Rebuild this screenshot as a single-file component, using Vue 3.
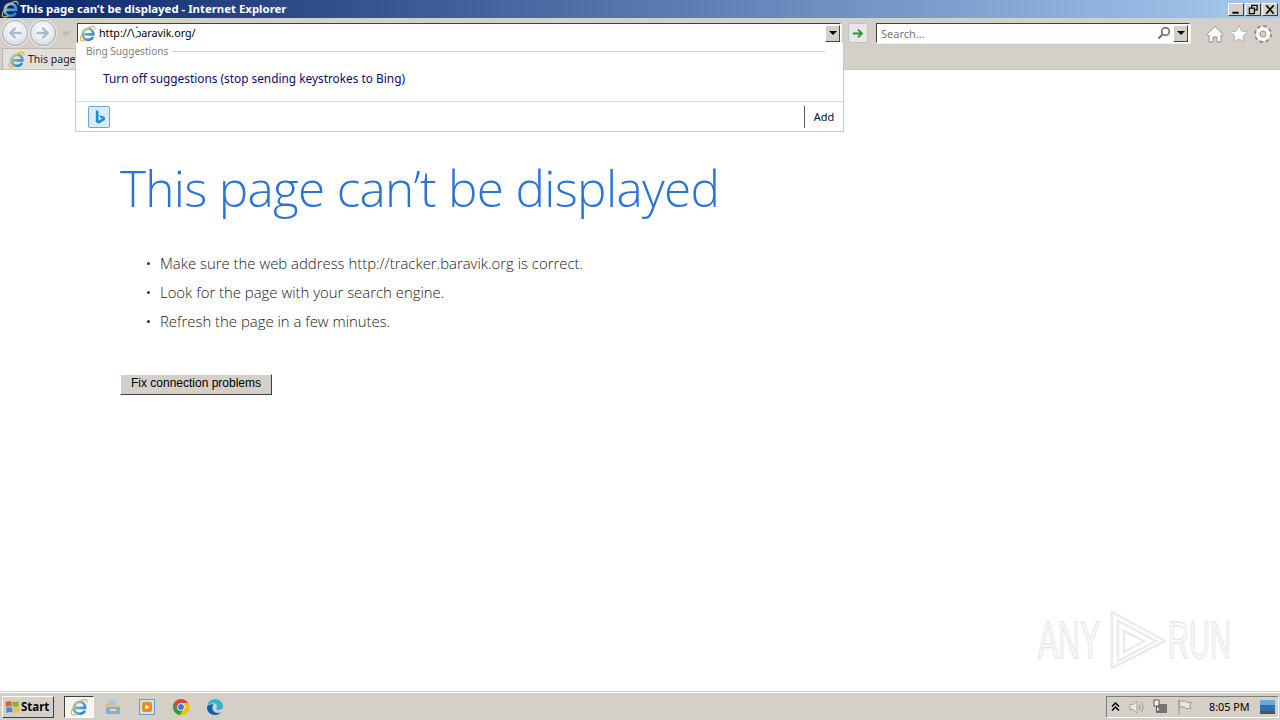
<template>
  <div class="window">
    <!-- title bar -->
    <header class="titlebar">
      <svg class="ie title-ie" viewBox="0 0 20 20"><use href="#ie-logo" /></svg>
      <span class="title-text">This page can’t be displayed - Internet Explorer</span>
      <div class="caption">
        <button class="cap-btn"><svg viewBox="0 0 14 12"><rect x="3" y="8.500" width="7" height="2" fill="#000" /></svg></button>
        <button class="cap-btn"><svg viewBox="0 0 14 12"><path d="M5.500 1.500h6v5H9M5.500 1.500v2.500M3 4.500h5.500v6H3z" fill="none" stroke="#000" stroke-width="1.300" /></svg></button>
        <button class="cap-btn"><svg viewBox="0 0 14 12"><path d="M3 1.500l8 9M11 1.500l-8 9" stroke="#000" stroke-width="1.700" /></svg></button>
      </div>
    </header>

    <!-- shared logo -->
    <svg width="0" height="0" class="defs">
      <defs>
        <linearGradient id="ie-grad" x1="0" y1="0" x2="1" y2="1">
          <stop offset="0" stop-color="#8fd3f2" />
          <stop offset="1" stop-color="#1e78c2" />
        </linearGradient>
        <symbol id="ie-logo" viewBox="0 0 20 20">
          <path d="M4.500 11h12.300c.3-3.900-2.300-6.600-6-6.600-3.800 0-6.500 2.900-6.500 6.600s2.700 6.500 6.500 6.500c2.700 0 4.600-1.200 5.600-3.300" fill="none" stroke="url(#ie-grad)" stroke-width="3" />
          <path d="M2.200 18.200C-.5 15.500 6 5.500 13 2.500c3.700-1.600 6.300-1 5.700 2.700M2.200 18.200c1.500 1.200 4 .500 6-.8" fill="none" stroke="#e6b33a" stroke-width="1.400" />
        </symbol>
      </defs>
    </svg>

    <!-- navigation row -->
    <div class="toolbar">
      <div class="nav">
        <button class="round"><svg viewBox="0 0 26 26"><path d="M20 13H8.500M13.500 7.500L8 13l5.500 5.500" fill="none" stroke="#f4f6f9" stroke-width="5" /><path d="M20 13H8.500M13.500 7.500L8 13l5.500 5.500" fill="none" stroke="#a9bace" stroke-width="2.600" /></svg></button>
        <button class="round"><svg viewBox="0 0 26 26"><path d="M6 13h11.500M12.500 7.500L18 13l-5.500 5.500" fill="none" stroke="#f4f6f9" stroke-width="5" /><path d="M6 13h11.500M12.500 7.500L18 13l-5.500 5.500" fill="none" stroke="#a9bace" stroke-width="2.600" /></svg></button>
        <svg class="nav-drop" viewBox="0 0 10 6"><path d="M.5.500h9L5 5.500z" fill="#bdbab3" /></svg>
      </div>
      <div class="address field">
        <svg class="ie addr-ie" viewBox="0 0 20 20"><use href="#ie-logo" /></svg>
        <span class="addr-text">http://\baravik.org/</span>
        <svg class="ibeam" viewBox="0 0 6 13"><rect x="0" y="2" width="2.500" height="9" fill="#fff" /><path d="M2 .500v1.500M.500 11.500l2-1" stroke="#000" /></svg>
        <button class="drop"><i></i></button>
      </div>
      <button class="go"><svg viewBox="0 0 16 14"><path d="M2 7h10M8 2.500L12.500 7 8 11.500" fill="none" stroke="#2f9a2a" stroke-width="2.200" /></svg></button>
      <div class="search field">
        <span class="search-text">Search...</span>
        <svg class="lens" viewBox="0 0 14 14"><circle cx="8.500" cy="5.500" r="3.800" fill="none" stroke="#6d6d6d" stroke-width="1.600" /><path d="M5.500 8.500L1.500 12.500" stroke="#6d6d6d" stroke-width="2" /></svg>
        <button class="drop"><i></i></button>
      </div>
      <div class="tools">
        <svg viewBox="0 0 20 20"><path d="M1.500 10.500L10 2.500l8.500 8-1.500 1.500-1-.9V18h-4v-5H8v5H4v-6.900l-1 .9z" fill="#fff" stroke="#8f8f8a" /></svg>
        <svg viewBox="0 0 20 20"><path d="M10 1.500l2.600 5.600 6 .7-4.500 4.100 1.200 6L10 14.900l-5.300 3 1.200-6-4.500-4.100 6-.7z" fill="#fff" stroke="#b4b4ae" /></svg>
        <svg viewBox="0 0 20 20"><circle cx="10" cy="10" r="7" fill="#fff" stroke="#8f8f8a" stroke-width="4" stroke-dasharray="3 2.500" /><circle cx="10" cy="10" r="6" fill="none" stroke="#fff" stroke-width="2.200" /><circle cx="10" cy="10" r="3" fill="#d4d0c8" stroke="#8f8f8a" /></svg>
      </div>
    </div>

    <!-- tab row -->
    <div class="tabs">
      <div class="tab">
        <svg class="ie tab-ie" viewBox="0 0 20 20"><use href="#ie-logo" /></svg>
        <span>This page</span>
      </div>
    </div>

    <!-- page content -->
    <main class="page">
      <h1>This page can’t be displayed</h1>
      <ul>
        <li v-for="tip in tips" :key="tip">{{ tip }}</li>
      </ul>
      <button class="fix">Fix connection problems</button>

      <!-- autocomplete flyout -->
      <div class="flyout">
        <div class="fly-head"><span>Bing Suggestions</span><i></i></div>
        <div class="fly-link">Turn off suggestions (stop sending keystrokes to Bing)</div>
        <div class="fly-foot">
          <div class="bing"><svg viewBox="0 0 22 22"><path d="M7.500 3.500l3 1v10.500l4-2.300-2-1-1.200-3 6.200 2.200v3.400l-7 4-3-1.700z" fill="#1593d8" /></svg></div>
          <button class="add">Add</button>
        </div>
      </div>

      <!-- watermark -->
      <div class="mark">
        <span class="any">ANY</span>
        <svg viewBox="0 0 57 60"><path d="M2 2l53 29L2 58zM8 11l38 20L8 51zM14 21l20 10-20 11z" fill="none" stroke="#ebebeb" stroke-width="2.500" /></svg>
        <span class="run">RUN</span>
      </div>
    </main>

    <!-- taskbar -->
    <footer class="taskbar">
      <button class="start">
        <svg viewBox="0 0 16 16"><g transform="rotate(-6 8 8)"><path d="M1 2.500c2-1 4-1 6 0v5c-2-1-4-1-6 0z" fill="#e2622b" /><path d="M8 2.500c2 1 4 1 6 0v5c-2 1-4 1-6 0z" fill="#7fb53a" /><path d="M1 8.500c2-1 4-1 6 0v5c-2-1-4-1-6 0z" fill="#3f8fd8" /><path d="M8 8.500c2 1 4 1 6 0v5c-2 1-4 1-6 0z" fill="#f2c037" /></g></svg>
        <span>Start</span>
      </button>
      <div class="quick">
        <div class="pinned active"><svg class="ie task-ie" viewBox="0 0 20 20"><use href="#ie-logo" /></svg></div>
        <div class="pinned">
          <svg viewBox="0 0 18 18"><path d="M2 5h5l1.500 2H16v9H2z" fill="#e9c46c" /><path d="M4 2.500h8v5H4z" fill="#9ecbe8" /><path d="M2 9h14v7H2z" fill="#7fb4d0" /><path d="M6 11h6v2H6z" fill="#e9dca8" /></svg>
        </div>
        <div class="pinned">
          <svg viewBox="0 0 18 18"><rect x="1.500" y="1.500" width="15" height="15" fill="#cfe0ef" stroke="#6f9cc9" /><rect x="4" y="4" width="10" height="10" rx="2" fill="#f08a1d" /><path d="M7.500 6.500v5l4-2.500z" fill="#fff" /></svg>
        </div>
        <div class="pinned">
          <svg viewBox="0 0 18 18"><circle cx="9" cy="9" r="8" fill="#db4437" /><path d="M9 5h7.300A8 8 0 0 1 8 17z" fill="#f4c20d" /><path d="M2 5.200A8 8 0 0 0 8 17l3.500-6H6z" fill="#2f9e44" /><circle cx="9" cy="9" r="3.800" fill="#fff" /><circle cx="9" cy="9" r="2.900" fill="#3b78e7" /></svg>
        </div>
        <div class="pinned">
          <svg viewBox="0 0 18 18"><path d="M1 9.500C1 4.500 4.500 1 9 1c4.800 0 8 3.400 8 7.500 0 2.500-2 3.500-4 3.500-1.500 0-2.800-.5-2.800-1.500 0-.6.700-.8.700-2.200 0-1.700-1.600-3-3.700-3C3.500 5.800 1 7.500 1 9.500z" fill="#36b7c9" /><path d="M1 9.500c0 4.500 3.500 7.500 8 7.500 2.300 0 4.500-.8 6-2.500-3 1-6 .5-7.500-1.500C6 11.200 6 8.500 7.500 6.200 4 6 1 7.500 1 9.500z" fill="#0f5fb4" /></svg>
        </div>
      </div>
      <div class="tray">
        <svg class="tray-up" viewBox="0 0 9 10"><path d="M1 4.500L4.500 1 8 4.500M1 8.500L4.500 5 8 8.500" fill="none" stroke="#000" stroke-width="1.500" /></svg>
        <svg class="speaker" viewBox="0 0 18 18"><path d="M2 6.500h3L9 3v12l-4-3.500H2z" fill="#eceae5" stroke="#a5a39e" /><path d="M11 6.500c1.200 1.500 1.200 3.500 0 5M13.500 4.500c2 2.500 2 6.500 0 9" fill="none" stroke="#a5a39e" stroke-width="1.200" /></svg>
        <svg class="network" viewBox="0 0 18 18"><rect x="5" y="6" width="11" height="9" fill="#77756f" /><path d="M3 2h5v6H3zM5.500 8v5H9" fill="#fff" stroke="#55534e" /></svg>
        <svg class="flag" viewBox="0 0 18 18"><path d="M3 1.500v15" stroke="#9b9994" stroke-width="1.200" /><path d="M3.500 3h6l1.500 1.500h5L13.500 8l1.500 2.500h-5L8.500 9h-5z" fill="#e8e6e1" stroke="#9b9994" /></svg>
        <span class="clock">8:05 PM</span>
        <svg class="desk" viewBox="0 0 15 14" preserveAspectRatio="none"><rect x="0" y="0" width="15" height="11" fill="#2f6fb4" /><rect x="0" y="0" width="15" height="5" fill="#6fa8d8" /><rect x="0" y="11" width="15" height="3" fill="#55534e" /></svg>
      </div>
    </footer>
  </div>
</template>

<script setup>
const tips = [
  'Make sure the web address http://tracker.baravik.org is correct.',
  'Look for the page with your search engine.',
  'Refresh the page in a few minutes.',
]
</script>

<style>
html,
body {
  margin: 0;
  overflow: hidden;
}
</style>

<style scoped>
.window {
  width: 1280px;
  height: 720px;
  display: flex;
  flex-direction: column;
  background: #fff;
  font-family: "DejaVu Sans", sans-serif;
  overflow: hidden;
}

.defs {
  position: absolute;
}

button {
  font-family: inherit;
  padding: 0;
}

.titlebar {
  flex: 0 0 18px;
  height: 18px;
  display: flex;
  align-items: center;
  background: linear-gradient(90deg, #0a246a 0%, #a6caf0 100%);
  color: #fff;
}

.title-ie {
  width: 18px;
  height: 18px;
  margin: 0 1px 0 1px;
  flex-shrink: 0;
}

.title-text {
  font-family: "Noto Sans", sans-serif;
  font-size: 11.4px;
  font-weight: 700;
  white-space: nowrap;
  padding-bottom: 2px;
}

.caption {
  margin-left: auto;
  margin-right: 2px;
  display: flex;
  gap: 1px;
}

.cap-btn {
  width: 16px;
  height: 13px;
  background: #d4d0c8;
  border: 1px solid;
  border-color: #fff #404040 #404040 #fff;
  box-sizing: border-box;
  display: flex;
}

.cap-btn svg {
  width: 100%;
  height: 100%;
}

.toolbar {
  flex: 0 0 30px;
  display: flex;
  align-items: flex-start;
  background: #d4d0c8;
  padding: 5px 0 0 2px;
  box-sizing: border-box;
}

.nav {
  display: flex;
  align-items: center;
  width: 73px;
  height: 21px;
}

.round {
  width: 26px;
  height: 26px;
  margin: -2px 2px 0 0;
  border-radius: 50%;
  border: 1px solid #a3acb6;
  background: radial-gradient(circle at 50% 35%, #fbfcfd 0%, #e4e9ef 60%, #c3cad3 100%);
  box-shadow: 0 0 0 1px #ecebe7;
  box-sizing: border-box;
  display: flex;
  flex-shrink: 0;
}

.round svg {
  width: 100%;
  height: 100%;
}

.nav-drop {
  width: 10px;
  height: 6px;
  margin-left: 3px;
}

.field {
  position: relative;
  display: flex;
  align-items: center;
  height: 20px;
  box-sizing: border-box;
  background: #fff;
  border: 1px solid;
  border-color: #404040 #fff #fff #404040;
  box-shadow: 1px 1px 0 #f3f2ef;
}

.address {
  width: 764px;
  margin-left: 2px;
}

.addr-ie {
  width: 17px;
  height: 17px;
  margin: 0 3px 0 1px;
  flex-shrink: 0;
}

.addr-text {
  font-family: "Noto Sans", sans-serif;
  font-size: 10.7px;
  color: #000;
}

/* mouse pointer sitting on the typed text */
.ibeam {
  position: absolute;
  left: 57px;
  top: 2px;
  width: 6px;
  height: 13px;
}

.drop {
  margin-left: auto;
  width: 15px;
  height: 17px;
  background: #d4d0c8;
  border: 1px solid;
  border-color: #fff #404040 #404040 #fff;
  box-sizing: border-box;
  display: flex;
  align-items: center;
  justify-content: center;
}

.drop i {
  border-left: 4px solid transparent;
  border-right: 4px solid transparent;
  border-top: 4px solid #000;
}

.go {
  width: 20px;
  height: 20px;
  margin: 0 0 0 7px;
  background: #e8e6ea;
  border: 1px solid #c4c2bd;
  border-radius: 3px;
  box-sizing: border-box;
  display: flex;
  align-items: center;
  justify-content: center;
}

.go svg {
  width: 14px;
  height: 13px;
}

.search {
  width: 314px;
  margin-left: 8px;
  padding-left: 4px;
}

.search-text {
  font-family: "Noto Sans", sans-serif;
  font-size: 11px;
  color: #777;
}

.lens {
  width: 14px;
  height: 14px;
  margin-left: auto;
  margin-right: 2px;
}

.search .drop {
  margin-left: 0;
  margin-right: 1px;
}

.tools {
  display: flex;
  gap: 4px;
  margin-left: 15px;
  padding-top: 1px;
}

.tools svg {
  width: 20px;
  height: 20px;
}

.tabs {
  flex: 0 0 22px;
  background: #d4d0c8;
  border-bottom: 1px solid #c6c2ba;
  box-sizing: border-box;
  display: flex;
  align-items: flex-end;
}

.tab {
  width: 160px;
  height: 21px;
  margin-left: 2px;
  padding-left: 5px;
  display: flex;
  align-items: center;
  gap: 3px;
  background: #e2dfd9;
  border: 1px solid #bcb8b0;
  border-bottom: 0;
  box-sizing: border-box;
  font-family: "Noto Sans", sans-serif;
  font-size: 10.5px;
  color: #222;
  white-space: nowrap;
}

.tab-ie {
  width: 17px;
  height: 17px;
  flex-shrink: 0;
}

.page {
  flex: 1;
  position: relative;
  padding: 88px 0 0 120px;
  box-sizing: border-box;
  font-family: "Open Sans", sans-serif;
  font-weight: 300;
}

h1 {
  margin: 0;
  font-size: 49.5px;
  line-height: 60px;
  font-weight: 300;
  color: #2a74d8;
  white-space: nowrap;
  letter-spacing: -0.7px;
}

ul {
  list-style: none;
  margin: 31px 0 0;
  padding: 0 0 0 40px;
}

li {
  position: relative;
  font-size: 14.9px;
  line-height: 29px;
  color: #222;
}

li::before {
  content: "";
  position: absolute;
  left: -13px;
  top: 13px;
  width: 3px;
  height: 3px;
  background: #333;
  border-radius: 50%;
}

.fix {
  display: block;
  margin-top: 38px;
  width: 152px;
  height: 21px;
  padding-bottom: 4px;
  background: #d4d0c8;
  border: 1px solid;
  border-color: #fff #404040 #404040 #fff;
  box-sizing: border-box;
  font-family: "Liberation Sans", sans-serif;
  font-size: 12px;
  color: #000;
}

.flyout {
  position: absolute;
  left: 75px;
  top: -27px;
  width: 769px;
  height: 89px;
  box-sizing: border-box;
  background: #fff;
  border: 1px solid #c9c9c9;
  border-top: 0;
  display: flex;
  flex-direction: column;
  font-family: "Noto Sans", sans-serif;
  font-weight: 400;
}

.fly-head {
  display: flex;
  align-items: center;
  gap: 4px;
  height: 16px;
  padding: 0 18px 0 10px;
  font-size: 10.1px;
  color: #808080;
}

.fly-head i {
  flex: 1;
  border-top: 1px solid #d0d0d0;
}

.fly-link {
  height: 43px;
  box-sizing: border-box;
  padding: 0 0 5px 27px;
  display: flex;
  align-items: center;
  font-size: 11.85px;
  color: #0a0a6e;
  border-bottom: 1px solid #d9d9d9;
}

.fly-foot {
  flex: 1;
  display: flex;
  align-items: center;
  justify-content: space-between;
  padding: 0 0 0 12px;
}

.bing {
  width: 22px;
  height: 22px;
  box-sizing: border-box;
  background: #d8ecf7;
  border: 1px solid #6aa9cf;
  border-radius: 2px;
  display: flex;
}

.add {
  height: 22px;
  width: 39px;
  background: none;
  border: 0;
  border-left: 1px solid #555;
  font-family: "Noto Sans", sans-serif;
  font-size: 11px;
  color: #111;
}

.mark {
  position: absolute;
  left: 1038px;
  top: 539px;
  display: flex;
  align-items: center;
  font-family: "Liberation Sans", sans-serif;
  font-weight: 400;
  font-size: 52px;
  line-height: 62px;
  color: #fafafa;
  -webkit-text-stroke: 1.5px #e8e8e8;
}

.mark span {
  display: inline-block;
  transform-origin: left center;
}

.any {
  width: 62px;
  transform: scaleX(0.58);
}

.run {
  width: 63px;
  transform: scaleX(0.56);
}

.mark svg {
  width: 57px;
  height: 60px;
  margin: 0 1px 0 10px;
}

.taskbar {
  flex: 0 0 28px;
  height: 28px;
  display: flex;
  align-items: center;
  background: #d4d0c8;
  border-top: 1px solid #fff;
  box-sizing: border-box;
  box-shadow: 0 -1px 0 #d4d0c8;
}

.start {
  width: 52px;
  height: 22px;
  margin-left: 2px;
  display: flex;
  align-items: center;
  gap: 0;
  padding-left: 2px;
  background: #d4d0c8;
  border: 1px solid;
  border-color: #fff #404040 #404040 #fff;
  box-sizing: border-box;
  font-family: "Noto Sans", sans-serif;
  font-size: 11.5px;
  font-weight: 700;
  color: #000;
}

.start svg {
  width: 16px;
  height: 16px;
}

.quick {
  display: flex;
  margin-left: 10px;
  gap: 4px;
}

.pinned {
  width: 30px;
  height: 22px;
  display: flex;
  align-items: center;
  justify-content: center;
  box-sizing: border-box;
}

.pinned svg {
  width: 18px;
  height: 18px;
}

.pinned.active {
  background: #f6f5f2;
  border: 1px solid;
  border-color: #404040 #fff #fff #404040;
}

.tray {
  margin-left: auto;
  margin-right: 1px;
  width: 173px;
  height: 22px;
  display: flex;
  align-items: center;
  box-sizing: border-box;
  border: 1px solid;
  border-color: #808080 #fff #fff #808080;
  padding-left: 4px;
}

.tray svg {
  width: 18px;
  height: 18px;
  flex-shrink: 0;
}

.tray .tray-up {
  width: 9px;
  height: 10px;
}

.tray .speaker {
  margin-left: 8px;
}

.tray .network {
  margin-left: 5px;
}

.tray .flag {
  margin-left: 7px;
}

.clock {
  font-family: "Noto Sans", sans-serif;
  font-size: 10.8px;
  color: #000;
  margin-left: 15px;
  white-space: nowrap;
}

.tray .desk {
  width: 15px;
  height: 14px;
  margin-left: auto;
  margin-right: 3px;
}
</style>
